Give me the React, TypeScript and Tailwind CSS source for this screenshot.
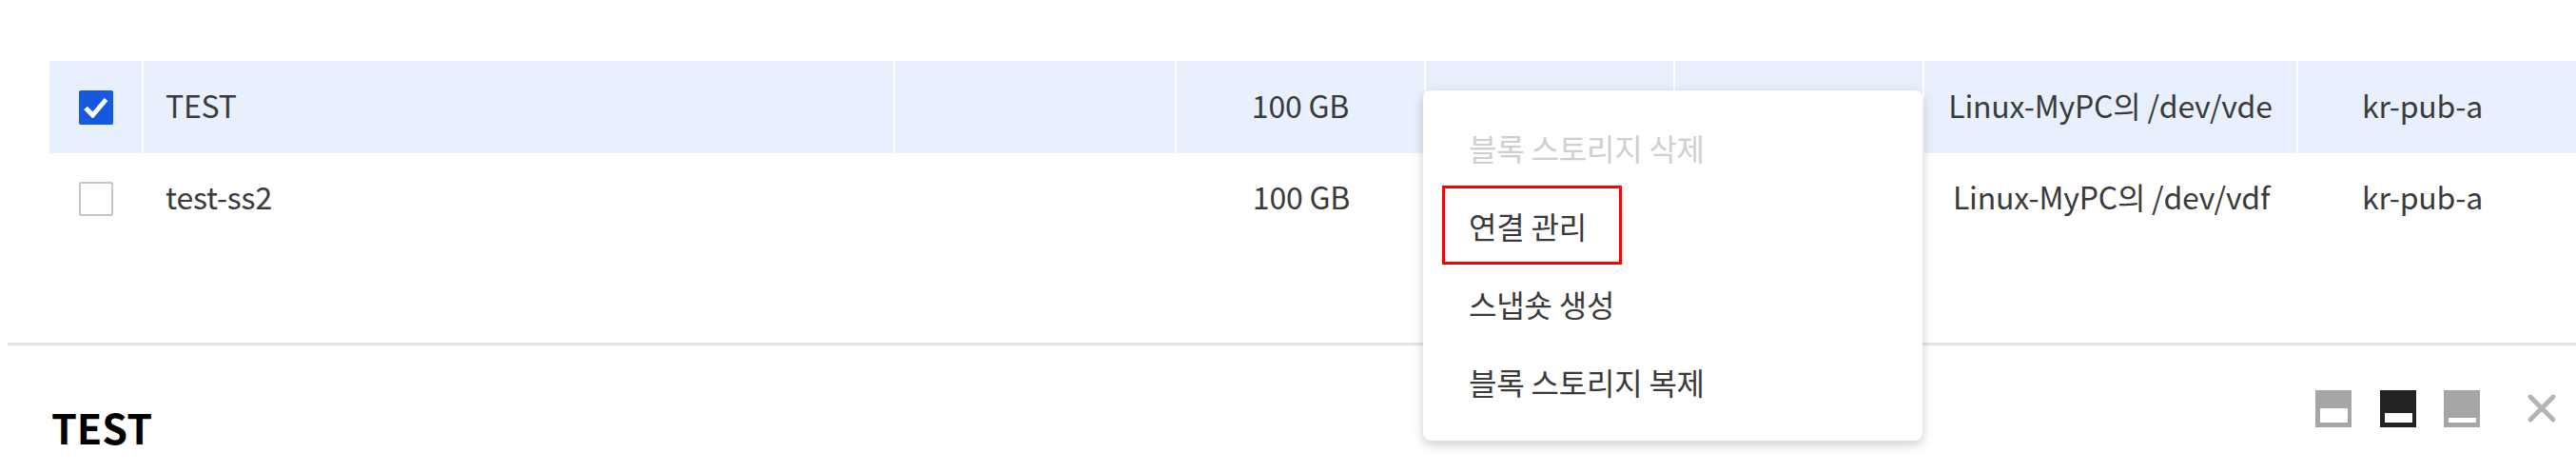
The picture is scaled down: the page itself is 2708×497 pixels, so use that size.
import { X } from 'lucide-react'

const columns = [
  'w-[99px]',
  'w-[790px]',
  'w-[296px]',
  'w-[262px]',
  'w-[262px]',
  'w-[262px]',
  'w-[393px]',
  'w-[261px]',
]

const rows = [
  { name: 'TEST', size: '100 GB', attached: 'Linux-MyPC의 /dev/vde', zone: 'kr-pub-a', checked: true },
  { name: 'test-ss2', size: '100 GB', attached: 'Linux-MyPC의 /dev/vdf', zone: 'kr-pub-a', checked: false },
]

const menuItems = [
  { label: '블록 스토리지 삭제', disabled: true },
  { label: '연결 관리', disabled: false },
  { label: '스냅숏 생성', disabled: false },
  { label: '블록 스토리지 복제', disabled: false },
]

function PanelIcon({ color, top }: { color: string; top: number }) {
  return (
    <svg width="38" height="39" viewBox="0 0 38 39">
      <rect width="38" height="39" fill={color} />
      <rect x="5" y={top} width="29" height={34 - top} fill="#fff" />
    </svg>
  )
}

export default function App() {
  return (
    <div className="relative w-[2708px] h-[497px] overflow-hidden bg-white font-['Noto_Sans_CJK_KR',sans-serif] text-[#3a3a3a]">
      {/* Table */}
      <div className="pt-[64px] pl-[52px] h-[360px]">
        {rows.map((row) => (
          <div key={row.name} className={`flex text-[32px] tracking-[-0.2px] ${row.checked ? 'h-[97px] leading-[92px] bg-[#e8f0fd]' : 'h-[95px] leading-[90px] bg-white'}`}>
            <div className={`${columns[0]} flex items-center pl-[31px] ${row.checked ? 'border-r-[2px] border-white' : ''}`}>
              {row.checked ? (
                <div className="w-[36px] h-[36px] rounded-[2px] bg-[#1559e0] flex items-center justify-center">
                  <svg width="26" height="22" viewBox="0 0 26 22" fill="none" stroke="#fff" strokeWidth="5">
                    <path d="M2 11.5 L9.5 19 L23.5 2.5" />
                  </svg>
                </div>
              ) : (
                <div className="w-[36px] h-[36px] rounded-[2px] border-[2px] border-[#c6c6c6] bg-white" />
              )}
            </div>
            <div className={`${columns[1]} pl-[23px] ${row.checked ? 'border-r-[2px] border-white' : ''}`}>{row.name}</div>
            <div className={`${columns[2]} ${row.checked ? 'border-r-[2px] border-white' : ''}`} />
            <div className={`${columns[3]} text-center ${row.checked ? 'border-r-[2px] border-white' : ''}`}>{row.size}</div>
            <div className={`${columns[4]} ${row.checked ? 'border-r-[2px] border-white' : ''}`} />
            <div className={`${columns[5]} ${row.checked ? 'border-r-[2px] border-white' : ''}`} />
            <div className={`${columns[6]} text-center ${row.checked ? 'border-r-[2px] border-white' : ''}`}>{row.attached}</div>
            <div className={`${columns[7]} text-center`}>{row.zone}</div>
          </div>
        ))}
      </div>

      {/* Detail panel */}
      <div className="ml-[8px] border-t-[3px] border-[#e4e4e4] flex items-start justify-between">
        <div className="ml-[46px] mt-[53px] text-[43px] leading-[64px] font-bold text-black">TEST</div>
        <div className="flex items-center mt-[42px] mr-[12px]">
          <PanelIcon color="#a6a6a6" top={19} />
          <div className="w-[30px]" />
          <PanelIcon color="#222222" top={24} />
          <div className="w-[29px]" />
          <PanelIcon color="#a6a6a6" top={29} />
          <X size={48} strokeWidth={2.4} color="#b4b4b4" className="ml-[41px]" />
        </div>
      </div>

      {/* Context menu */}
      <div className="absolute left-[1496px] top-[95px] w-[525px] h-[368px] bg-white rounded-[8px] shadow-[0_4px_12px_rgba(0,0,0,0.2)] pt-[19px] text-[32px] tracking-[-0.2px]">
        {menuItems.map((item) => (
          <div key={item.label} className={`h-[82px] flex items-center pl-[48px] ${item.disabled ? 'text-[#cfcfcf]' : 'text-[#3a3a3a]'}`}>
            {item.label}
          </div>
        ))}
        <div className="absolute left-[20px] top-[100px] w-[189px] h-[83px] border-[3px] border-[#ff0000]" />
      </div>
    </div>
  )
}
